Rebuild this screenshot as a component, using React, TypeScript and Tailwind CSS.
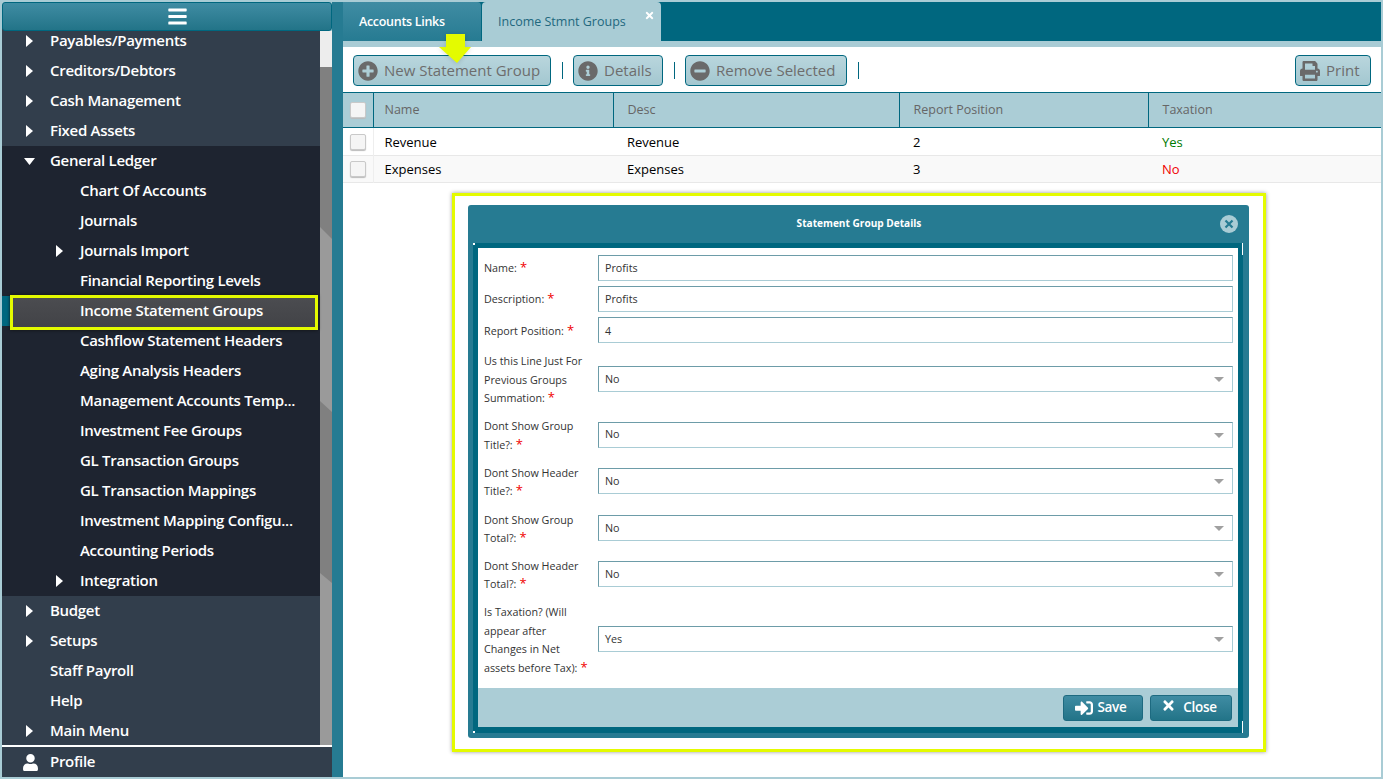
import type { ReactNode } from 'react';
import { FaBars, FaInfoCircle, FaMinusCircle, FaPlusCircle, FaPrint, FaSignInAlt, FaTimes, FaUser } from 'react-icons/fa';

const topMenu = ['Payables/Payments', 'Creditors/Debtors', 'Cash Management', 'Fixed Assets'];
const glMenu = [
  { label: 'Chart Of Accounts' },
  { label: 'Journals' },
  { label: 'Journals Import', arrow: true },
  { label: 'Financial Reporting Levels' },
  { label: 'Income Statement Groups', active: true },
  { label: 'Cashflow Statement Headers' },
  { label: 'Aging Analysis Headers' },
  { label: 'Management Accounts Temp...' },
  { label: 'Investment Fee Groups' },
  { label: 'GL Transaction Groups' },
  { label: 'GL Transaction Mappings' },
  { label: 'Investment Mapping Configu...' },
  { label: 'Accounting Periods' },
  { label: 'Integration', arrow: true },
];
const bottomMenu = [
  { label: 'Budget', arrow: true },
  { label: 'Setups', arrow: true },
  { label: 'Staff Payroll' },
  { label: 'Help' },
  { label: 'Main Menu', arrow: true },
];

const fields = [
  { label: ['Name:'], value: 'Profits', h: 'h-[31px]' },
  { label: ['Description:'], value: 'Profits', h: 'h-[31px]' },
  { label: ['Report Position:'], value: '4', h: 'h-[32px]' },
  { label: ['Us this Line Just For', 'Previous Groups', 'Summation:'], value: 'No', select: true, h: 'h-[66px]' },
  { label: ['Dont Show Group', 'Title?:'], value: 'No', select: true, h: 'h-[45px]' },
  { label: ['Dont Show Header', 'Title?:'], value: 'No', select: true, h: 'h-[48px]' },
  { label: ['Dont Show Group', 'Total?:'], value: 'No', select: true, h: 'h-[46px]' },
  { label: ['Dont Show Header', 'Total?:'], value: 'No', select: true, h: 'h-[46px]' },
  { label: ['Is Taxation? (Will', 'appear after', 'Changes in Net', 'assets before Tax):'], value: 'Yes', select: true, h: 'h-[84px]' },
];

function CaretRight() {
  return (
    <svg width="7" height="12" viewBox="0 0 7 12">
      <path d="M0 0L7 6L0 12z" fill="#ffffff" />
    </svg>
  );
}

function CaretDown() {
  return (
    <svg width="11" height="7" viewBox="0 0 11 7">
      <path d="M0 0H11L5.5 7z" fill="#ffffff" />
    </svg>
  );
}

function MenuRow({ label, arrow, open }: { label: string; arrow?: boolean; open?: boolean }) {
  return (
    <div className="flex h-[30px] items-center">
      <span className="flex w-[48px] shrink-0 justify-center pl-[7px]">
        {open ? <CaretDown /> : arrow ? <CaretRight /> : null}
      </span>
      <span className="whitespace-nowrap pb-[2px]">{label}</span>
    </div>
  );
}

function SubRow({ label, arrow, active }: { label: string; arrow?: boolean; active?: boolean }) {
  return (
    <div className={active ? 'relative flex h-[30px] items-center' : 'flex h-[30px] items-center'}>
      {active ? (
        <>
          <span className="absolute top-0 left-0 h-[30px] w-[8px] bg-[#00677f]" />
          <span className="absolute -top-[1px] left-[8px] z-10 h-[35px] w-[308px] border-[3px] border-[#e4fb00] bg-gradient-to-b from-[#4b4c50] to-[#424347] shadow-[0_0_3px_#111]" />
        </>
      ) : null}
      <span className="flex w-[78px] shrink-0 justify-center pl-[37px]">
        {arrow ? <CaretRight /> : null}
      </span>
      <span className="relative z-20 whitespace-nowrap pb-[2px]">{label}</span>
    </div>
  );
}

function ToolButton({ icon, label, width }: { icon: ReactNode; label: string; width: string }) {
  return (
    <button className={`flex h-[31px] ${width} items-center gap-[6px] whitespace-nowrap rounded-[4px] border border-[#00677f] bg-gradient-to-b from-[#b9d6dd] to-[#a3c7d0] pl-[4px] text-[15px] text-[#6d6d6d]`}>
      <span className="text-[20px] text-[#6a6a6a]">{icon}</span>
      {label}
    </button>
  );
}

function Check() {
  return <span className="block h-[16px] w-[16px] rounded-[2px] border border-[#c9c9c9] bg-[#f5f5f5] shadow-[0_1px_1px_#bbb]" />;
}

export default function App() {
  return (
    <div className="flex h-[779px] w-[1383px] overflow-hidden bg-[#a9ccd5] p-[2px] font-['Open_Sans',sans-serif]">
      {/* Sidebar */}
      <aside className="flex w-[330px] shrink-0 flex-col">
        <div className="z-10 flex h-[29px] shrink-0 items-center justify-center rounded-[3px] border border-[#00677f] bg-gradient-to-b from-[#3f8ca3] to-[#227488] pl-[20px] text-[21px] text-white">
          <FaBars />
        </div>
        <div className="flex min-h-0 flex-1">
          <div className="-mt-[5px] w-[318px] shrink-0 bg-[#323e4c] text-[15px] font-semibold tracking-[-0.3px] text-white">
            {topMenu.map((m) => <MenuRow key={m} label={m} arrow />)}
            <div className="bg-[#1e2430]">
              <MenuRow label="General Ledger" open />
              {glMenu.map((m) => <SubRow key={m.label} {...m} />)}
            </div>
            {bottomMenu.map((m) => <MenuRow key={m.label} {...m} />)}
          </div>
          <svg className="block h-full w-[12px] shrink-0" viewBox="0 0 12 714" preserveAspectRatio="none">
            <rect width="12" height="714" fill="#9a9a9a" />
            <rect width="12" height="36" fill="#ededed" />
            <path d="M0 36H12V208L0 196z" fill="#808080" />
            <path d="M0 370L12 381V552L0 542z" fill="#808080" />
          </svg>
        </div>
        <div className="flex h-[32px] shrink-0 items-center border-t-[2px] border-white bg-[#323e4c] text-[15px] font-semibold tracking-[-0.3px] text-white">
          <span className="flex w-[48px] shrink-0 justify-center pl-[8px] text-[17px]"><FaUser /></span>
          <span className="pb-[2px]">Profile</span>
        </div>
      </aside>

      {/* Main */}
      <main className="flex min-w-0 flex-1 flex-col bg-white pl-[11px] shadow-[inset_11px_0_0_#267b92]">
        <div className="flex h-[39px] shrink-0 bg-[#00677f] text-[12.5px]">
          <div className="flex w-[138px] items-center rounded-tr-[4px] bg-gradient-to-b from-[#3f8ca3] to-[#267b92] pt-[2px] pl-[16px] font-semibold tracking-[-0.3px] text-white">
            Accounts Links
          </div>
          <div className="relative ml-px flex w-[179px] items-center rounded-t-[4px] bg-[#a9ccd5] pt-[2px] pl-[16px] text-[#22687e]">
            Income Stmnt Groups
            <FaTimes className="absolute top-[8px] right-[6px] text-[11px] text-white" />
          </div>
        </div>
        <div className="h-[6px] shrink-0 bg-[#a9ccd5]" />

        <div className="relative flex h-[45px] shrink-0 items-center px-[10px] pt-[2px]">
          <ToolButton icon={<FaPlusCircle />} label="New Statement Group" width="w-[198px]" />
          <span className="mr-[10px] ml-[11px] h-[17px] border-l border-[#00677f]" />
          <ToolButton icon={<FaInfoCircle />} label="Details" width="w-[90px]" />
          <span className="mr-[10px] ml-[11px] h-[17px] border-l border-[#00677f]" />
          <ToolButton icon={<FaMinusCircle />} label="Remove Selected" width="w-[162px]" />
          <span className="ml-[11px] h-[17px] border-l border-[#00677f]" />
          <div className="ml-auto">
            <ToolButton icon={<FaPrint />} label="Print" width="w-[76px]" />
          </div>
          <svg className="absolute -top-[13px] left-[96px] drop-shadow-sm" width="32" height="29" viewBox="0 0 32 29">
            <path d="M7 0H26V13H32L18 29L0 13H7z" fill="#e4fb00" />
          </svg>
        </div>

        <table className="w-full shrink-0 table-fixed border-collapse text-[13px]">
          <colgroup>
            <col className="w-[30px]" />
            <col className="w-[240px]" />
            <col className="w-[286px]" />
            <col className="w-[249px]" />
            <col />
          </colgroup>
          <thead>
            <tr className="h-[35px] border-y border-[#00677f] bg-[#abcdd6] text-left text-[12.5px] text-[#666666]">
              <th className="border-r border-[#00677f] pl-[7px] font-normal"><Check /></th>
              <th className="border-r border-[#00677f] pl-[11px] font-normal">Name</th>
              <th className="border-r border-[#00677f] pl-[14px] font-normal">Desc</th>
              <th className="border-r border-[#00677f] pl-[14px] font-normal">Report Position</th>
              <th className="pl-[14px] font-normal">Taxation</th>
            </tr>
          </thead>
          <tbody className="text-black">
            <tr className="h-[28px] border-b border-[#e8e8e8]">
              <td className="border-r border-[#eeeeee] pl-[7px]"><Check /></td>
              <td className="pt-[2px] pl-[11px]">Revenue</td>
              <td className="pt-[2px] pl-[14px]">Revenue</td>
              <td className="pt-[2px] pl-[14px]">2</td>
              <td className="pt-[2px] pl-[14px] text-[#007a00]">Yes</td>
            </tr>
            <tr className="h-[27px] border-b border-[#e8e8e8] bg-[#f9f9f9]">
              <td className="border-r border-[#eeeeee] pl-[7px]"><Check /></td>
              <td className="pt-[2px] pl-[11px]">Expenses</td>
              <td className="pt-[2px] pl-[14px]">Expenses</td>
              <td className="pt-[2px] pl-[14px]">3</td>
              <td className="pt-[2px] pl-[14px] text-[#f00000]">No</td>
            </tr>
          </tbody>
        </table>

        {/* Dialog highlighted in yellow */}
        <div className="mt-[10px] ml-[109px] h-[559px] w-[814px] shrink-0 border-[3px] border-[#e4fb00] bg-white pt-[9px] pl-[13px] shadow-[0_0_4px_#999]">
          <div className="flex h-[533px] w-[781px] flex-col rounded-[3px] bg-[#267b92] pr-[6px] pb-[5px] pl-[5px]">
            <div className="relative flex h-[38px] shrink-0 items-center justify-center pl-[2px] text-[10.1px] font-bold text-white">
              Statement Group Details
              <svg className="absolute top-[10px] right-[5px]" width="18" height="18" viewBox="0 0 18 18">
                <circle cx="9" cy="9" r="9" fill="#a9ccd5" />
                <path d="M5.5 5.5L12.5 12.5M12.5 5.5L5.5 12.5" stroke="#267b92" strokeWidth="2.2" />
              </svg>
            </div>
            <div className="relative flex min-h-0 flex-1 flex-col border-[5px] border-b-[6px] border-[#00677f] bg-white">
              <span className="absolute -top-[5px] -left-[5px] h-[2px] w-[2px] bg-white" />
              <span className="absolute -top-[5px] -right-[5px] h-[12px] w-px bg-white" />
              <span className="absolute -bottom-[6px] -left-[5px] h-[2px] w-[2px] bg-white" />
              <span className="absolute -right-[5px] -bottom-[6px] h-[12px] w-px bg-white" />
              <div className="flex-1 pt-[4px] pr-[5px] pl-[6px] text-[10.75px] text-[#333333]">
                {fields.map((f) => (
                  <div key={f.label.join(' ')} className={`flex ${f.h} items-center`}>
                    <div className="w-[114px] shrink-0 pt-[2px] leading-[18.5px]">
                      {f.label.map((l, i) => (
                        <div key={l}>
                          {l}
                          {i === f.label.length - 1 ? <span className="ml-[3px] text-[13px] leading-[10px] text-[#f00000]">*</span> : null}
                        </div>
                      ))}
                    </div>
                    <div className={f.select ? 'relative flex h-[26px] flex-1 items-center border border-[#6d9ca8] border-r-[#a9ccd5] border-b-[#a9ccd5] pl-[6px]' : 'relative flex h-[26px] flex-1 items-center border border-[#6d9ca8] border-r-[#a9ccd5] border-b-[#a9ccd5] pt-[2px] pl-[6px]'}>
                      {f.value}
                      {f.select ? <span className="absolute top-[10px] right-[8px] h-0 w-0 border-x-[5px] border-t-[5px] border-x-transparent border-t-[#a0a0a0]" /> : null}
                    </div>
                  </div>
                ))}
              </div>
              <div className="flex h-[39px] shrink-0 items-center justify-end gap-[7px] bg-[#abcdd6] pr-[6px] text-[13.5px] font-semibold tracking-[-0.3px] text-white">
                <button className="flex h-[26px] w-[80px] items-center justify-center gap-[4px] rounded-[3px] border border-[#1d6a80] bg-gradient-to-b from-[#3f8ca3] to-[#227488] pr-[4px]">
                  <FaSignInAlt className="text-[18px]" /> Save
                </button>
                <button className="flex h-[26px] w-[82px] items-center justify-center gap-[7px] rounded-[3px] border border-[#1d6a80] bg-gradient-to-b from-[#3f8ca3] to-[#227488] pr-[4px]">
                  <FaTimes className="-mt-[5px] text-[15px]" /> Close
                </button>
              </div>
            </div>
          </div>
        </div>
      </main>
    </div>
  );
}
